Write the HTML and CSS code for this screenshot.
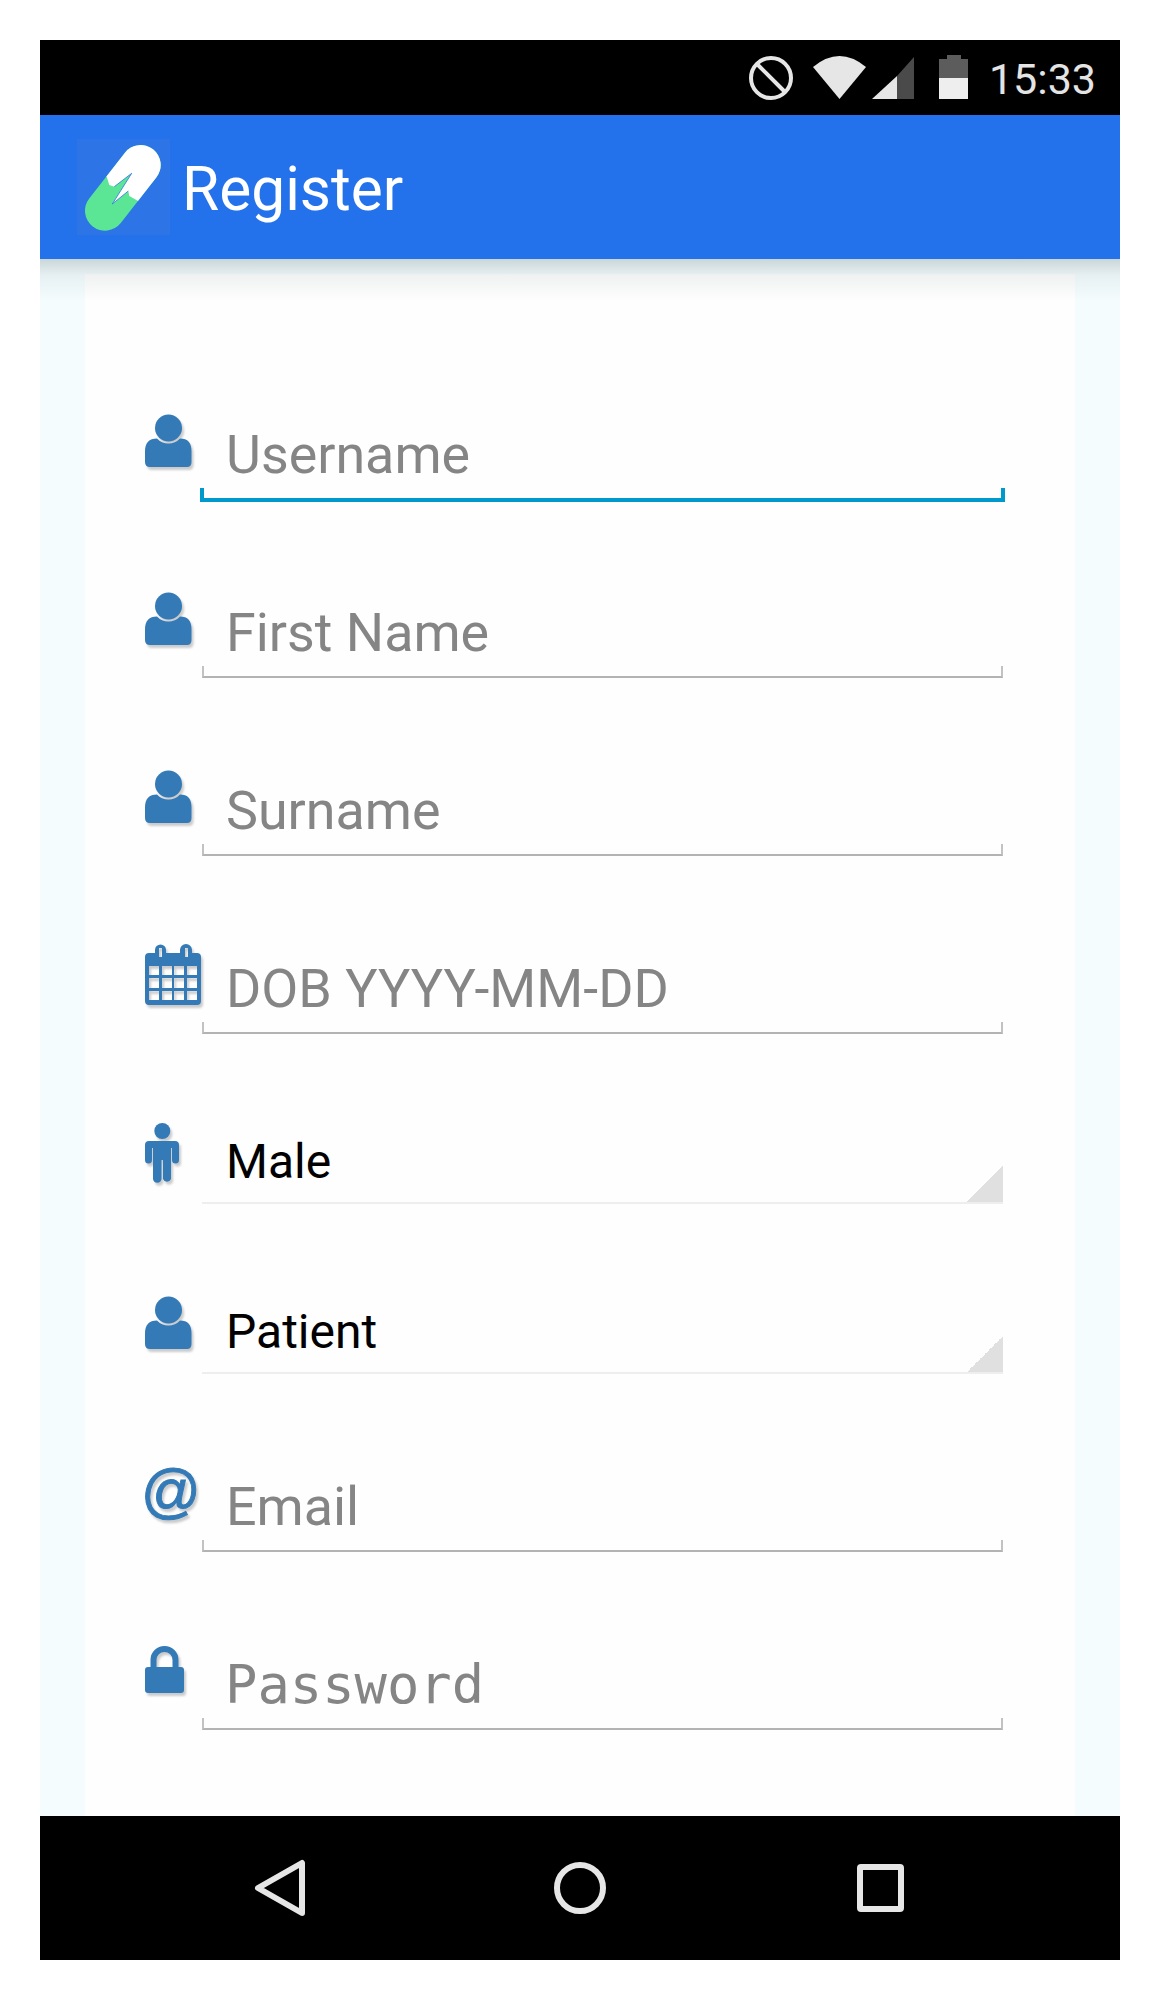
FILE: index.html
```html
<!DOCTYPE html>
<html lang="en">
<head>
  <meta charset="UTF-8">
  <meta name="viewport" content="width=device-width, initial-scale=1.0">
  <title>Register</title>
  <link rel="stylesheet" href="styles.css">
</head>
<body>
  <svg class="defs" width="0" height="0">
    <defs>
      <symbol id="person" viewBox="0 0 57 64" overflow="visible">
        <circle cx="23.5" cy="18" r="13.5"/>
        <path d="M5 57 H42 Q46.5 57 46.5 52 V41 C46.5 33 43 28.5 35 28.5 A15.5 15.5 0 0 1 12 28.5 C4 28.5 0 33 0 41 V52 Q0 57 5 57 Z"/>
      </symbol>
    </defs>
  </svg>

  <div class="phone">
    <div class="status-bar">
      <svg class="st-block" width="44" height="44" viewBox="0 0 44 44">
        <circle cx="22" cy="22" r="20" fill="none" stroke="#e6e6e6" stroke-width="4"/>
        <path d="M8 8 L36 36" stroke="#e6e6e6" stroke-width="4"/>
      </svg>
      <svg class="st-wifi" width="53" height="43" viewBox="0 0 53 43">
        <path d="M0 11 Q26.5 -11 53 11 L26.5 43 Z" fill="#e6e6e6"/>
      </svg>
      <svg class="st-signal" width="42" height="42" viewBox="0 0 42 42">
        <path d="M0 42 L25 19 V42 Z" fill="#e6e6e6"/>
        <path d="M25 19 L42 0 V42 H25 Z" fill="#4a4a4a"/>
      </svg>
      <svg class="st-battery" width="29" height="44" viewBox="0 0 29 44">
        <path d="M8 0 H22 V4 H29 V23 H0 V4 H8 Z" fill="#5c5c5c"/>
        <rect x="0" y="23" width="29" height="21" fill="#eeeeee"/>
      </svg>
      <span class="clock">15:33</span>
    </div>

    <div class="app-bar">
      <svg class="logo" width="93" height="96" viewBox="0 0 93 96">
        <defs>
          <clipPath id="pill-top">
            <path d="M0 37 L29.7 37.7 L32.3 46 L37.3 47.7 L54.7 34.3 L35.3 65 L51.3 52 L52.3 57 L60.7 61.7 L93 78 V0 H0 Z"/>
          </clipPath>
        </defs>
        <rect width="93" height="96" fill="#2d74e6"/>
        <path d="M63.7 26 L28 71.7" stroke="#5ae695" stroke-width="40" stroke-linecap="round"/>
        <path d="M63.7 26 L28 71.7" stroke="#ffffff" stroke-width="40" stroke-linecap="round" clip-path="url(#pill-top)"/>
        <path d="M37.3 47.7 L54.7 34.3 L35.3 65 L51.3 52" fill="none" stroke="#2d74e6" stroke-width="0.8"/>
      </svg>
      <span class="app-title">Register</span>
    </div>

    <div class="content">
      <div class="card">
        <div class="row">
          <svg class="icon"><use href="#person"/></svg>
          <div class="field">
            <span class="hint">Username</span>
            <div class="line line-focus"></div>
          </div>
        </div>

        <div class="row">
          <svg class="icon"><use href="#person"/></svg>
          <div class="field">
            <span class="hint">First Name</span>
            <div class="line"></div>
          </div>
        </div>

        <div class="row">
          <svg class="icon"><use href="#person"/></svg>
          <div class="field">
            <span class="hint">Surname</span>
            <div class="line"></div>
          </div>
        </div>

        <div class="row">
          <svg class="icon" viewBox="0 0 57 64">
            <path fill-rule="evenodd" d="M4 9 H10 V6 A5.5 5.5 0 0 1 21 6 V9 H35 V6 A6 6 0 0 1 47 6 V9 H52 Q56 9 56 13 V57 Q56 61 52 61 H4 Q0 61 0 57 V13 Q0 9 4 9 Z M14 4 V13 H17 V4 Z M40 4 V13 H43 V4 Z M4 22 V31 H14 V22 Z M17 22 V31 H27 V22 Z M29 22 V31 H39 V22 Z M42 22 V31 H52 V22 Z M4 34 V44 H14 V34 Z M17 34 V44 H27 V34 Z M29 34 V44 H39 V34 Z M42 34 V44 H52 V34 Z M4 47 V56 H14 V47 Z M17 47 V56 H27 V47 Z M29 47 V56 H39 V47 Z M42 47 V56 H52 V47 Z"/>
          </svg>
          <div class="field">
            <span class="hint">DOB YYYY-MM-DD</span>
            <div class="line"></div>
          </div>
        </div>

        <div class="row row-select">
          <svg class="icon" viewBox="0 0 57 64">
            <circle cx="17.3" cy="9" r="8"/>
            <path d="M4 19 H30 Q34 19 34 23 V38 A3.5 3.5 0 0 1 27 38 V26 H26 V57 A4.3 4.3 0 0 1 18 57 V38 H16.5 V57 A4.3 4.3 0 0 1 8 57 V26 H7 V38 A3.5 3.5 0 0 1 0 38 V23 Q0 19 4 19 Z"/>
          </svg>
          <div class="select">
            <span class="select-value">Male</span>
            <span class="select-arrow"></span>
          </div>
        </div>

        <div class="row row-select">
          <svg class="icon"><use href="#person"/></svg>
          <div class="select">
            <span class="select-value">Patient</span>
            <span class="select-arrow"></span>
          </div>
        </div>

        <div class="row">
          <div class="icon icon-box"><span class="icon-at">@</span></div>
          <div class="field">
            <span class="hint">Email</span>
            <div class="line"></div>
          </div>
        </div>

        <div class="row">
          <svg class="icon" viewBox="0 0 57 64">
            <path d="M8.5 28 V20 A11 11 0 0 1 30.5 20 V28" fill="none" stroke="#337ab7" stroke-width="6"/>
            <rect x="0" y="27" width="39" height="26" rx="3"/>
          </svg>
          <div class="field">
            <span class="hint hint-mono">Password</span>
            <div class="line"></div>
          </div>
        </div>
      </div>
    </div>

    <div class="nav-bar">
      <svg width="60" height="60" viewBox="0 0 60 60">
        <path d="M8 30 L52 5 V55 Z" fill="none" stroke="#e6e6e6" stroke-width="6" stroke-linejoin="round"/>
      </svg>
      <svg width="60" height="60" viewBox="0 0 60 60">
        <circle cx="30" cy="30" r="23" fill="none" stroke="#e6e6e6" stroke-width="6"/>
      </svg>
      <svg width="60" height="60" viewBox="0 0 60 60">
        <rect x="10" y="9" width="41" height="42" rx="1" fill="none" stroke="#e6e6e6" stroke-width="6"/>
      </svg>
    </div>
  </div>
</body>
</html>
```

FILE: styles.css
```css
html, body {
  background: #fff;
}

body {
  margin: 40px 36px 36px 40px;
  font-family: Roboto, 'Noto Sans', sans-serif;
}

.defs {
  position: absolute;
}

.phone {
  width: 1080px;
  height: 1920px;
  display: flex;
  flex-direction: column;
}

.status-bar {
  height: 75px;
  flex: none;
  background: #000;
  display: flex;
  align-items: flex-start;
  justify-content: flex-end;
  padding: 15px 24px 0 0;
  box-sizing: border-box;
}

.st-block {
  margin-top: 1px;
  margin-right: 20px;
}

.st-wifi {
  margin-top: 1px;
  margin-right: 6px;
}

.st-signal {
  margin-top: 2px;
  margin-right: 25px;
}

.st-battery {
  margin-right: 21px;
}

.clock {
  color: #e4e4e4;
  font-size: 43px;
  line-height: 50px;
  margin-top: -1px;
}

.app-bar {
  position: relative;
  height: 144px;
  flex: none;
  background: #2472eb;
  display: flex;
  align-items: center;
  padding-left: 37px;
  box-sizing: border-box;
}

.app-bar::after {
  content: "";
  position: absolute;
  left: 0;
  right: 0;
  top: 100%;
  height: 42px;
  background: linear-gradient(to bottom, rgba(90, 115, 115, 0.28), rgba(90, 115, 115, 0.09) 16px, rgba(90, 115, 115, 0));
}

.logo {
  margin-right: 12px;
}

.app-title {
  color: #fff;
  font-size: 60.4px;
  line-height: 70px;
  margin-top: 6px;
}

.content {
  flex: 1;
  min-height: 0;
  overflow: hidden;
  background: #f4fcfe;
  padding: 15px 45px 0;
  display: flex;
}

.card {
  flex: 1;
  background: #fefefe;
  padding: 48px 72px 0 60px;
}

.row {
  display: flex;
  height: 178px;
}

.row-select {
  height: 170px;
}

.icon {
  width: 57px;
  height: 64px;
  flex: none;
  margin-top: 88px;
  overflow: visible;
  fill: #337ab7;
  filter: drop-shadow(2px 3px 1px rgba(0, 0, 0, 0.2));
}

.icon-at {
  display: block;
  margin: -3px 0 0 -5px;
  color: #337ab7;
  font: italic 400 59px/64px 'Liberation Sans', sans-serif;
  -webkit-text-stroke: 1px #337ab7;
}

.field,
.select {
  flex: 1;
  display: flex;
  min-width: 0;
}

.field {
  flex-direction: column;
  justify-content: flex-end;
}

.hint {
  color: #858585;
  font-size: 53.8px;
  line-height: 64px;
  padding-left: 24px;
  margin-bottom: 1px;
  white-space: nowrap;
}

.hint-mono {
  font-family: 'DejaVu Sans Mono', 'Liberation Mono', monospace;
  font-size: 53.8px;
  padding-left: 23px;
}

.line {
  height: 10px;
  flex: none;
  border: 2px solid #c2c2c2;
  border-top: 0;
  border-bottom-color: #b3b3b3;
}

.line-focus {
  height: 10px;
  margin: 0 -2px -2px;
  border-width: 0 4px 4px;
  border-color: #0099cc;
}

.select {
  align-items: flex-end;
  justify-content: space-between;
  align-self: flex-end;
  border-bottom: 2px solid #eeeeee;
}

.select-value {
  color: #000;
  font-size: 48px;
  line-height: 58px;
  padding-left: 24px;
  padding-bottom: 11px;
}

.select-arrow {
  width: 36px;
  height: 36px;
  flex: none;
  background: linear-gradient(to bottom right, transparent 50%, #e0e0e0 50%);
}

.nav-bar {
  height: 144px;
  flex: none;
  background: #000;
  display: flex;
  align-items: center;
  justify-content: center;
  gap: 240px;
}
```
